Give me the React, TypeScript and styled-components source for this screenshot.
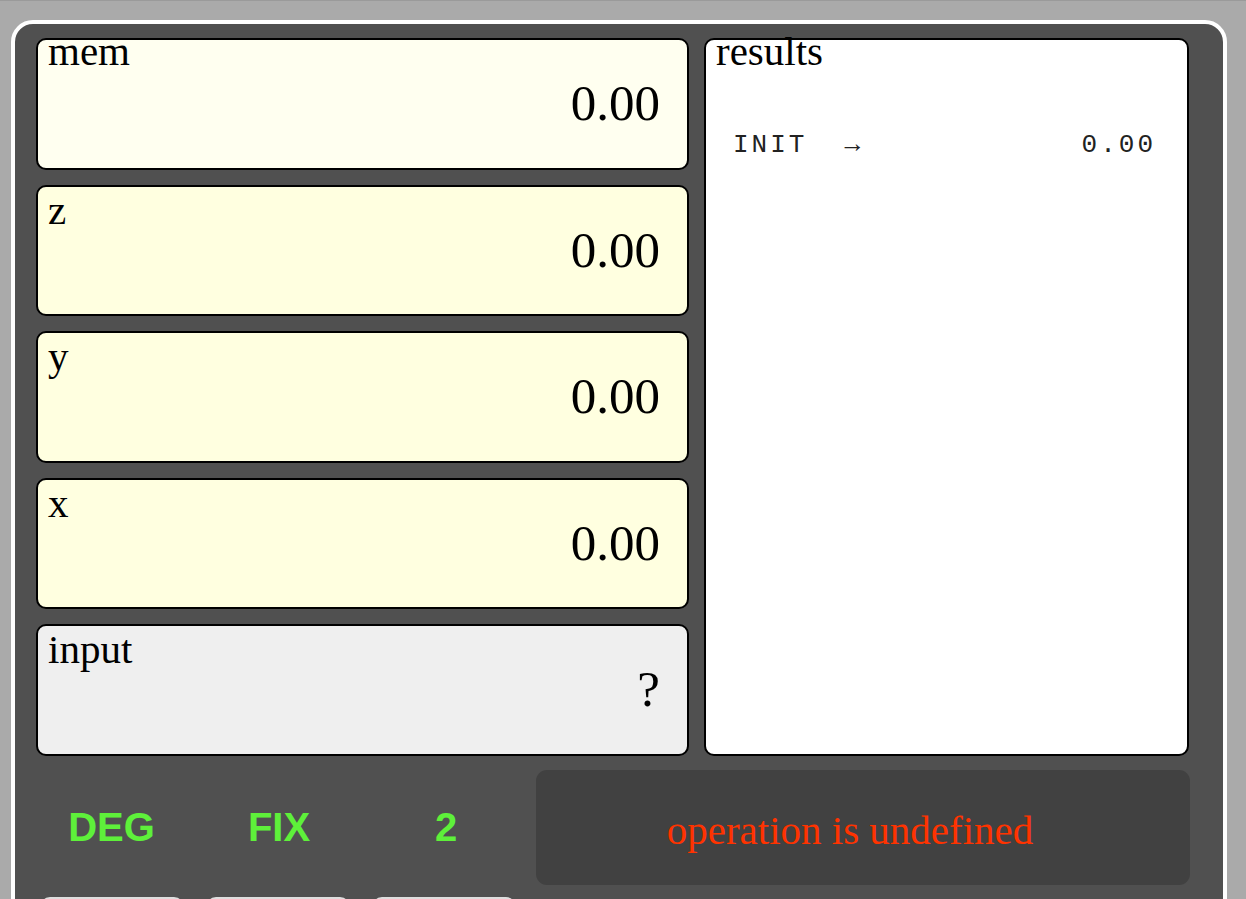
import styled, { createGlobalStyle } from 'styled-components';

const GlobalStyle = createGlobalStyle`
  html, body {
    margin: 0;
    padding: 0;
    background: #aaaaaa;
  }
  body {
    border-top: 1px solid #9a9a9a;
  }
`;

const Page = styled.div`
  padding: 19px 19px 0 11px;
`;

const Calculator = styled.div`
  background: #505050;
  border: 4px solid #ffffff;
  border-radius: 22px;
  padding: 14px 34px 40px 21px;
  box-sizing: border-box;
  width: 1216px;
`;

const Display = styled.div`
  display: grid;
  grid-template-columns: 653px 485px;
  gap: 15px;
  height: 718px;
`;

const Stack = styled.div`
  display: flex;
  flex-direction: column;
  gap: 15px;
`;

const Register = styled.div<{ $bg: string }>`
  flex: 1;
  display: flex;
  flex-direction: column;
  background: ${(p) => p.$bg};
  border: 2px solid #000;
  border-radius: 10px;
  padding: 0 27px 0 10px;
  font-family: 'Liberation Serif', 'Times New Roman', serif;
  color: #000;
`;

const Label = styled.div<{ $low?: boolean }>`
  font-size: 41px;
  line-height: 23px;
  margin-top: ${(p) => (p.$low ? '12px' : '0')};
  margin-bottom: ${(p) => (p.$low ? '-12px' : '0')};
`;

const Value = styled.div`
  font-size: 51px;
  line-height: 56px;
  margin-top: 12px;
  text-align: right;
`;

const Results = styled.div`
  background: #ffffff;
  border: 2px solid #000;
  border-radius: 10px;
  padding: 0 10px;
  font-family: 'Liberation Serif', 'Times New Roman', serif;
`;

const ResultRow = styled.div`
  display: flex;
  justify-content: space-between;
  margin-top: 67px;
  padding: 0 21px 0 17px;
  font-family: 'Liberation Mono', 'Courier New', monospace;
  font-size: 26px;
  line-height: 30px;
  letter-spacing: 3px;
  white-space: pre;
  color: #222;
`;

const StatusBar = styled.div`
  display: grid;
  grid-template-columns: 151px 184px 150px 1fr;
  margin-top: 14px;
  height: 115px;
`;

const Flag = styled.div`
  display: flex;
  align-items: center;
  justify-content: center;
  font-family: 'Liberation Sans', Arial, sans-serif;
  font-weight: bold;
  font-size: 40px;
  color: #5ef03a;
`;

const Message = styled.div`
  margin-left: 15px;
  margin-right: -1px;
  display: flex;
  align-items: center;
  justify-content: center;
  padding: 4px 26px 0 0;
  background: #414141;
  border-radius: 11px;
  font-family: 'Liberation Serif', 'Times New Roman', serif;
  font-size: 41px;
  color: #ff3300;
`;

const Keys = styled.div`
  display: flex;
  gap: 22px;
  margin-top: 12px;
  padding-left: 4px;
`;

const Key = styled.div`
  width: 144px;
  height: 60px;
  background: #dedede;
  border-radius: 10px;
`;

const registers = [
  { name: 'mem', value: '0.00', bg: '#fffff0' },
  { name: 'z', value: '0.00', bg: '#ffffe0' },
  { name: 'y', value: '0.00', bg: '#ffffe0' },
  { name: 'x', value: '0.00', bg: '#ffffe0' },
  { name: 'input', value: '?', bg: '#efefef' },
];

export default function App() {
  return (
    <>
      <GlobalStyle />
      <Page>
        <Calculator>
          <Display>
            <Stack>
              {registers.map((r) => (
                <Register key={r.name} $bg={r.bg}>
                  <Label $low={r.name !== 'mem'}>{r.name}</Label>
                  <Value>{r.value}</Value>
                </Register>
              ))}
            </Stack>
            <Results>
              <Label>results</Label>
              <ResultRow>
                <span>{'INIT  →'}</span>
                <span>0.00</span>
              </ResultRow>
            </Results>
          </Display>
          <StatusBar>
            <Flag>DEG</Flag>
            <Flag>FIX</Flag>
            <Flag>2</Flag>
            <Message>operation is undefined</Message>
          </StatusBar>
          <Keys>
            <Key />
            <Key />
            <Key />
          </Keys>
        </Calculator>
      </Page>
    </>
  );
}
